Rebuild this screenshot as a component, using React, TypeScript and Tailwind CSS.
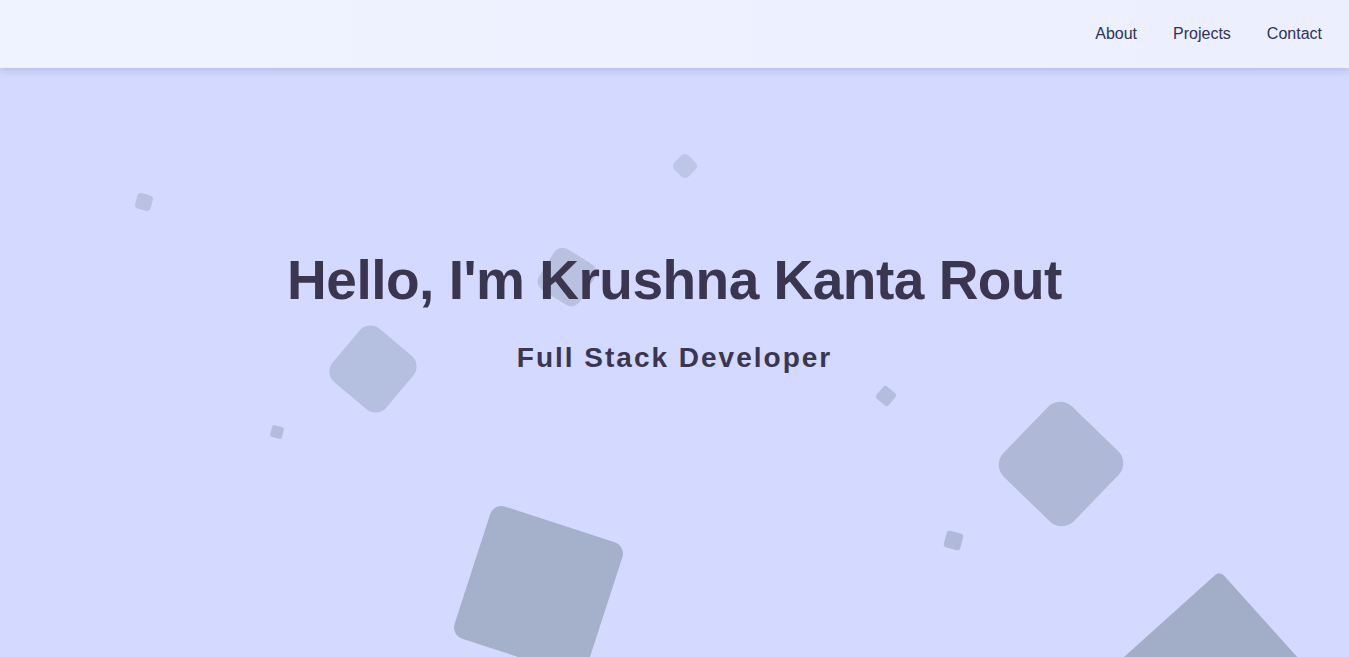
import React from "react";

const shapes = [
  "left-[136px] top-[194px] w-[16px] h-[16px] rotate-[15deg] rounded-[4px] bg-[#b9c1e2]",
  "left-[675px] top-[156px] w-[20px] h-[20px] rotate-[45deg] rounded-[5px] bg-[#bec6e8]",
  "left-[543px] top-[253px] w-[48px] h-[48px] rotate-[32deg] rounded-[10px] bg-[#b9c1e0]",
  "left-[338px] top-[334px] w-[70px] h-[70px] rotate-[40deg] rounded-[14px] bg-[#b5bfdf]",
  "left-[271px] top-[426px] w-[12px] h-[12px] rotate-[15deg] rounded-[2px] bg-[#b3bcdc]",
  "left-[878px] top-[388px] w-[16px] h-[16px] rotate-[40deg] rounded-[3px] bg-[#b5bddc]",
  "left-[1012px] top-[415px] w-[98px] h-[98px] rotate-[44deg] rounded-[17px] bg-[#afb8d6]",
  "left-[945px] top-[532px] w-[17px] h-[17px] rotate-[15deg] rounded-[3px] bg-[#b0b9d8]",
  "left-[469px] top-[521px] w-[139px] h-[139px] rotate-[18deg] rounded-[12px] bg-[#a5b0cb]",
  "left-[1123px] top-[608px] w-[180px] h-[180px] rotate-[48deg] rounded-[6px] bg-[#a2adc8]",
];

export default function App() {
  return (
    <div className="relative w-full h-[657px] overflow-hidden bg-[#d3d9ff] font-['Liberation_Sans',Arial,sans-serif]">
      <div className="absolute inset-0 pointer-events-none">
        {shapes.map((c, i) => (
          <div key={i} className={"absolute " + c} />
        ))}
      </div>

      <nav className="relative z-10 h-[68px] flex items-center justify-end gap-9 pr-[27px] bg-gradient-to-r from-[#eff2ff] to-[#eceffe] shadow-[0_2px_8px_rgba(80,90,160,0.25)]">
        <a className="text-[16px] text-[#2c3458]">About</a>
        <a className="text-[16px] text-[#2c3458]">Projects</a>
        <a className="text-[16px] text-[#2c3458]">Contact</a>
      </nav>

      <main className="relative flex flex-col items-center pt-[179px]">
        <h1 className="text-[55px] leading-[1.2] font-bold tracking-[-0.5px] text-[#3a3650]">
          Hello, I'm Krushna Kanta Rout
        </h1>
        <p className="mt-[29px] text-[28px] leading-[1.15] font-bold tracking-[2px] text-[#3a3650]">
          Full Stack Developer
        </p>
      </main>
    </div>
  );
}
